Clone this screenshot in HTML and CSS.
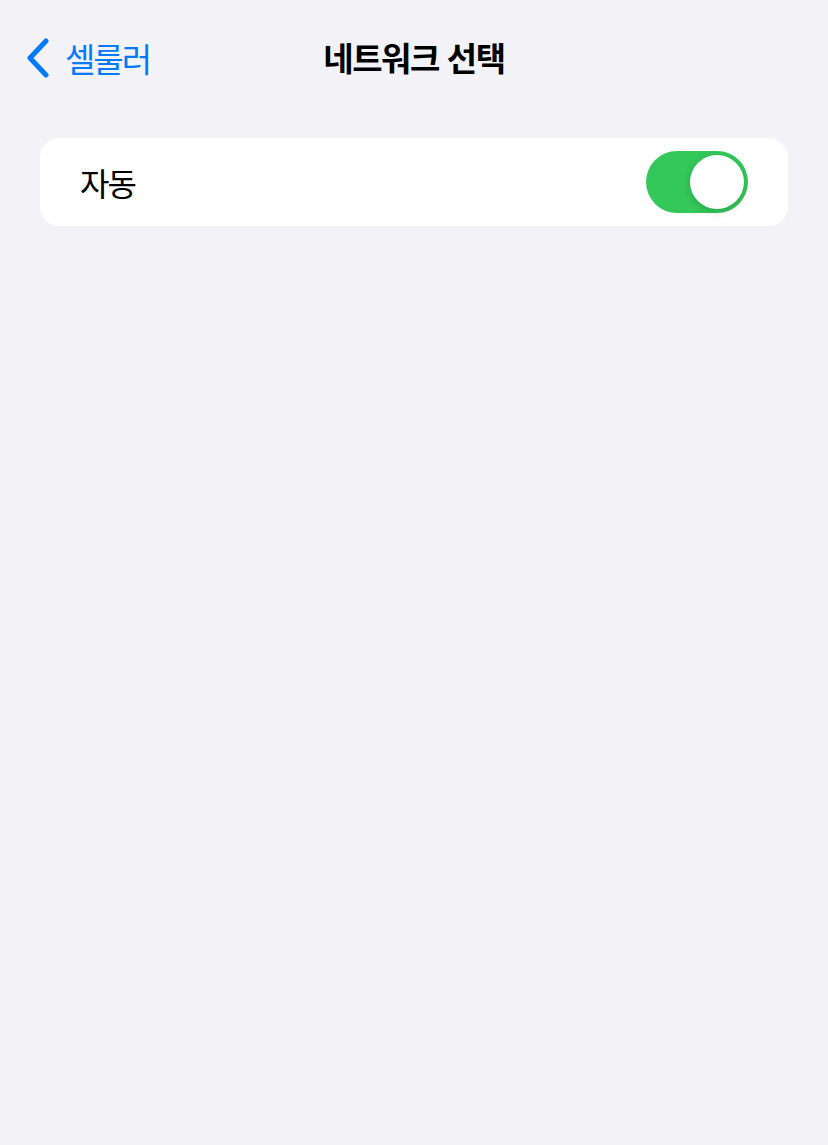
FILE: index.html
```html
<!DOCTYPE html>
<html lang="ko">
<head>
  <meta charset="UTF-8" />
  <meta name="viewport" content="width=device-width, initial-scale=1.0" />
  <title>네트워크 선택</title>
  <link rel="stylesheet" href="styles.css">
</head>
<body>
  <header class="navbar">
    <a class="back" href="#">
      <svg class="chevron" width="26" height="40" viewBox="0 0 26 40">
        <path d="M21 3 L5 20 L21 37" fill="none" stroke="#007aff" stroke-width="5" stroke-linecap="round" stroke-linejoin="round" />
      </svg>
      <span>셀룰러</span>
    </a>
    <h1>네트워크 선택</h1>
  </header>

  <section class="group">
    <div class="row">
      <span class="label">자동</span>
      <span class="switch on"><span class="knob"></span></span>
    </div>
  </section>
</body>
</html>
```

FILE: styles.css
```css
body {
  font-family: "Noto Sans CJK KR", "Noto Sans", sans-serif;
  background-color: #f2f2f7;
  margin: 0;
  width: 828px;
  height: 1145px;
}
.navbar {
  position: relative;
  height: 118px;
  display: flex;
  align-items: center;
  justify-content: center;
  padding-bottom: 4px;
  box-sizing: border-box;
}
.back {
  position: absolute;
  left: 25px;
  top: 38px;
  display: flex;
  align-items: center;
  gap: 14px;
  color: #007aff;
  text-decoration: none;
  font-size: 33px;
  letter-spacing: -2px;
}
.back span {
  line-height: 40px;
}
h1 {
  margin: 0;
  font-size: 33px;
  font-weight: 700;
  letter-spacing: -1.4px;
  color: #000;
}
.group {
  margin: 20px 40px 0;
  background: #fff;
  border-radius: 20px;
}
.row {
  height: 88px;
  display: flex;
  align-items: center;
  justify-content: space-between;
  padding: 0 40px;
}
.label {
  font-size: 32px;
  letter-spacing: -2px;
  color: #000;
}
.switch {
  width: 102px;
  height: 62px;
  border-radius: 31px;
  background: #e9e9eb;
  position: relative;
  flex-shrink: 0;
}
.switch.on {
  background: #34c759;
}
.knob {
  position: absolute;
  top: 4px;
  right: 4px;
  width: 54px;
  height: 54px;
  border-radius: 50%;
  background: #fff;
  box-shadow: 0 3px 8px rgba(0, 0, 0, 0.15);
}
```
